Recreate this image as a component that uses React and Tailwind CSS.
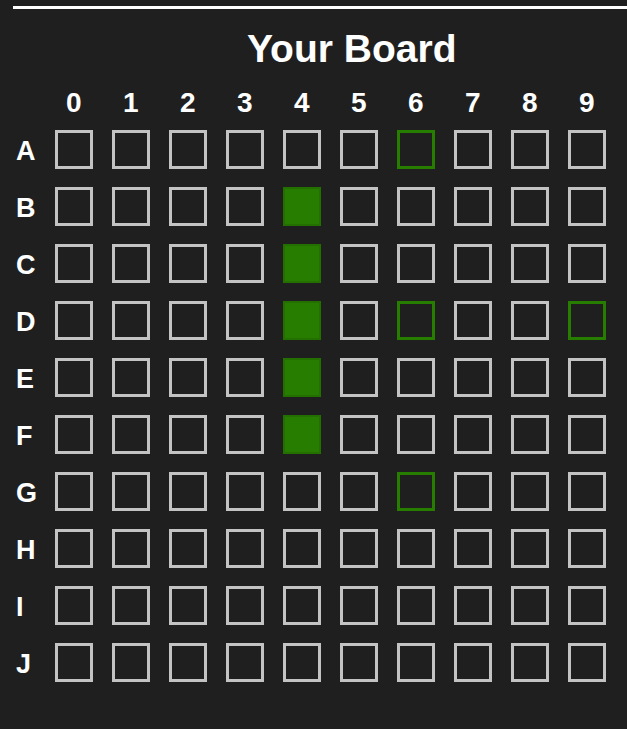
import React from "react";

const ROWS = ["A", "B", "C", "D", "E", "F", "G", "H", "I", "J"];
const COLS = [0, 1, 2, 3, 4, 5, 6, 7, 8, 9];

// ship cells and the ones marked as near-miss
const SHIP = ["B4", "C4", "D4", "E4", "F4"];
const MARKED = ["A6", "D6", "D9", "G6"];

const Cell = ({ id }) => {
  if (SHIP.includes(id)) {
    return <div className="w-[38.5px] h-[38.5px] border-[2px] border-[#236f00] bg-[#277d00]" />;
  }
  if (MARKED.includes(id)) {
    return <div className="w-[38.5px] h-[38.5px] border-[3.5px] border-[#277d00]" />;
  }
  return <div className="w-[38.5px] h-[38.5px] border-[3.5px] border-[#c3c3c3]" />;
};

const App = () => {
  return (
    <div className="min-h-screen bg-[#1f1f1f] text-white font-['Liberation_Sans',Arial,sans-serif] overflow-hidden">
      <div className="pt-[6px] pl-[13px]">
        <div className="h-[3px] bg-white" />
      </div>

      <h2 className="mt-[20px] pl-[247px] text-[39px] leading-[39px] font-bold whitespace-nowrap">
        Your Board
      </h2>

      <div className="mt-[20px] grid grid-cols-[36px_repeat(10,38.5px)] gap-x-[18.5px] h-[29px]">
        <div />
        {COLS.map((c) => (
          <div key={c} className="text-center text-[28px] leading-[29px] font-bold">
            {c}
          </div>
        ))}
      </div>

      <div className="mt-[13px] grid grid-cols-[36px_repeat(10,38.5px)] gap-x-[18.5px] gap-y-[18.5px]">
        {ROWS.map((r) => (
          <React.Fragment key={r}>
            <div className="pl-[16px] pt-[4px] flex items-center text-[27px] leading-[28px] font-bold">{r}</div>
            {COLS.map((c) => (
              <Cell key={r + c} id={r + c} />
            ))}
          </React.Fragment>
        ))}
      </div>
    </div>
  );
};

export default App;
